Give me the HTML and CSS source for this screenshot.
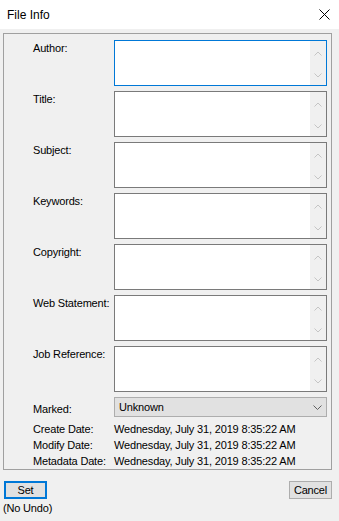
FILE: index.html
```html
<!DOCTYPE html>
<html lang="en">
<head>
    <meta charset="UTF-8">
    <title>File Info</title>
    <link rel="stylesheet" href="styles.css">
</head>
<body>

<div class="titlebar">
    <span>File Info</span>
    <svg class="close" width="11" height="11" viewBox="0 0 11 11">
        <path d="M0.5 0.5 L10.5 10.5 M10.5 0.5 L0.5 10.5" stroke="#000" stroke-width="1" fill="none"/>
    </svg>
</div>

<div class="panel">
    <div class="fields">
        <label class="label">Author:</label>
        <div class="box focused">
            <div class="scroll">
                <svg width="8" height="5" viewBox="0 0 8 5"><polyline points="0.5,4.5 4,1 7.5,4.5" class="chev"/></svg>
                <svg width="8" height="5" viewBox="0 0 8 5"><polyline points="0.5,0.5 4,4 7.5,0.5" class="chev"/></svg>
            </div>
        </div>

        <label class="label">Title:</label>
        <div class="box">
            <div class="scroll">
                <svg width="8" height="5" viewBox="0 0 8 5"><polyline points="0.5,4.5 4,1 7.5,4.5" class="chev"/></svg>
                <svg width="8" height="5" viewBox="0 0 8 5"><polyline points="0.5,0.5 4,4 7.5,0.5" class="chev"/></svg>
            </div>
        </div>

        <label class="label">Subject:</label>
        <div class="box">
            <div class="scroll">
                <svg width="8" height="5" viewBox="0 0 8 5"><polyline points="0.5,4.5 4,1 7.5,4.5" class="chev"/></svg>
                <svg width="8" height="5" viewBox="0 0 8 5"><polyline points="0.5,0.5 4,4 7.5,0.5" class="chev"/></svg>
            </div>
        </div>

        <label class="label">Keywords:</label>
        <div class="box">
            <div class="scroll">
                <svg width="8" height="5" viewBox="0 0 8 5"><polyline points="0.5,4.5 4,1 7.5,4.5" class="chev"/></svg>
                <svg width="8" height="5" viewBox="0 0 8 5"><polyline points="0.5,0.5 4,4 7.5,0.5" class="chev"/></svg>
            </div>
        </div>

        <label class="label">Copyright:</label>
        <div class="box">
            <div class="scroll">
                <svg width="8" height="5" viewBox="0 0 8 5"><polyline points="0.5,4.5 4,1 7.5,4.5" class="chev"/></svg>
                <svg width="8" height="5" viewBox="0 0 8 5"><polyline points="0.5,0.5 4,4 7.5,0.5" class="chev"/></svg>
            </div>
        </div>

        <label class="label">Web Statement:</label>
        <div class="box">
            <div class="scroll">
                <svg width="8" height="5" viewBox="0 0 8 5"><polyline points="0.5,4.5 4,1 7.5,4.5" class="chev"/></svg>
                <svg width="8" height="5" viewBox="0 0 8 5"><polyline points="0.5,0.5 4,4 7.5,0.5" class="chev"/></svg>
            </div>
        </div>

        <label class="label">Job Reference:</label>
        <div class="box">
            <div class="scroll">
                <svg width="8" height="5" viewBox="0 0 8 5"><polyline points="0.5,4.5 4,1 7.5,4.5" class="chev"/></svg>
                <svg width="8" height="5" viewBox="0 0 8 5"><polyline points="0.5,0.5 4,4 7.5,0.5" class="chev"/></svg>
            </div>
        </div>

        <label class="label marked">Marked:</label>
        <div class="dropdown">
            <span>Unknown</span>
            <svg width="9" height="5" viewBox="0 0 9 5"><polyline points="0.5,0.5 4.5,4.5 8.5,0.5" class="chev dark"/></svg>
        </div>
    </div>

    <div class="dates">
        <span>Create Date:</span>
        <span>Wednesday, July 31, 2019 8:35:22 AM</span>
        <span>Modify Date:</span>
        <span>Wednesday, July 31, 2019 8:35:22 AM</span>
        <span>Metadata Date:</span>
        <span>Wednesday, July 31, 2019 8:35:22 AM</span>
    </div>
</div>

<div class="actions">
    <button type="button" class="btn default">Set</button>
    <button type="button" class="btn">Cancel</button>
</div>
<div class="note">(No Undo)</div>

</body>
</html>
```

FILE: styles.css
```css
body {
    margin: 0;
    background-color: #f0f0f0;
    font-family: "Liberation Sans", Arial, sans-serif;
    font-size: 11px;
    line-height: 16px;
    letter-spacing: -0.17px;
    color: #000;
}
.titlebar {
    height: 29px;
    background-color: #fff;
    display: flex;
    align-items: center;
    justify-content: space-between;
    padding: 0 9px 0 7px;
    font-size: 12px;
    letter-spacing: 0;
}
.close {
    display: block;
}
.panel {
    margin: 4px 7px 0 3px;
    padding: 6px 4px 0 29px;
    border: 1px solid #a0a0a0;
}
.fields {
    display: grid;
    grid-template-columns: 81px 213px;
    row-gap: 5px;
}
.label {
    display: block;
}
.label.marked {
    padding-top: 4px;
}
.box {
    height: 44px;
    background-color: #fff;
    border: 1px solid #7a7a7a;
    display: flex;
    justify-content: flex-end;
}
.box.focused {
    border-color: #0078d7;
}
.scroll {
    width: 16px;
    background-color: #f0f0f0;
    display: flex;
    flex-direction: column;
    align-items: center;
    justify-content: space-between;
    padding: 10px 0 7px;
}
.scroll svg {
    display: block;
}
.chev {
    fill: none;
    stroke: #c5c5c5;
    stroke-width: 1;
}
.chev.dark {
    stroke: #606060;
}
.dropdown {
    height: 18px;
    background-color: #e1e1e1;
    border: 1px solid #adadad;
    display: flex;
    align-items: center;
    justify-content: space-between;
    padding: 0 4px 0 4px;
}
.dates {
    display: grid;
    grid-template-columns: 81px 213px;
    margin-top: 4px;
    white-space: nowrap;
}
.actions {
    display: flex;
    justify-content: space-between;
    padding: 0 7px 0 4px;
    margin-top: 11px;
}
.btn {
    width: 43px;
    height: 18px;
    padding: 0;
    font-family: inherit;
    font-size: 11px;
    letter-spacing: -0.17px;
    line-height: 14px;
    color: #000;
    background-color: #e1e1e1;
    border: 1px solid #adadad;
    border-radius: 0;
}
.btn.default {
    border: 2px solid #0078d7;
}
.note {
    margin: 1px 0 0 3px;
}
```
